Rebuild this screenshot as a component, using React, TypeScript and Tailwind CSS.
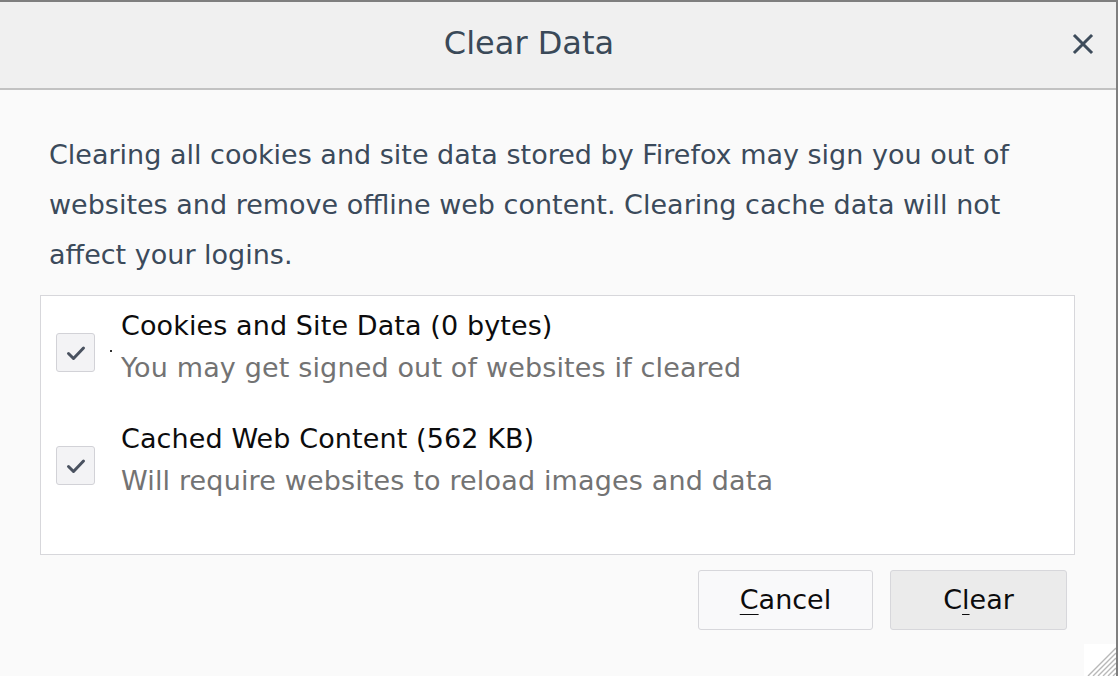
import React, { useState } from "react";

const font = { fontFamily: '"DejaVu Sans", Verdana, sans-serif' };

function CheckItem({
	label,
	hint,
	checked,
	onToggle,
	dot,
}: {
	label: string;
	hint: string;
	checked: boolean;
	onToggle: () => void;
	dot?: boolean;
}) {
	return (
		<label className="relative flex items-start cursor-default">
			<span
				onClick={onToggle}
				className="mt-[27px] w-[39px] h-[39px] shrink-0 flex items-center justify-center rounded-[3px] border border-[#d2d2d7] bg-[#f3f3f5]"
			>
				{checked && (
					<svg width="22" height="18" viewBox="0 0 22 18">
						<path
							d="M3.5 9.5 L8.5 14.5 L18.5 4"
							fill="none"
							stroke="#4a5260"
							strokeWidth="3"
							strokeLinecap="round"
							strokeLinejoin="round"
						/>
					</svg>
				)}
			</span>
			{dot && <span className="absolute left-[54px] top-[44px] w-[2px] h-[2px] bg-[#333]" />}
			<span className="ml-[26px] flex flex-col">
				<span className="text-[27px] leading-[40px] text-[#0c0c0d] tracking-[0.1px]">{label}</span>
				<span className="mt-[2px] text-[27px] leading-[40px] text-[#737373] tracking-[0.15px]">{hint}</span>
			</span>
		</label>
	);
}

export default function App() {
	const [cookies, setCookies] = useState(true);
	const [cache, setCache] = useState(true);

	return (
		<div
			style={font}
			className="relative w-[1118px] h-[676px] overflow-hidden flex flex-col bg-[#fafafa] border-t-2 border-r-2 border-[#7f7f7f]"
		>
			{/* Header */}
			<div className="relative h-[88px] shrink-0 flex items-center justify-center bg-[#f0f0f0] border-b-2 border-[#c2c2c2]">
				<h1 className="text-[32px] leading-none text-[#3a4958] -mt-[4px] -ml-[58px]">Clear Data</h1>
				<button className="absolute right-[21px] top-[30px] w-[24px] h-[24px] flex items-center justify-center">
					<svg width="22" height="22" viewBox="0 0 22 22">
						<path
							d="M3 3 L19 19 M19 3 L3 19"
							stroke="#3e4c5b"
							strokeWidth="3"
							strokeLinecap="square"
						/>
					</svg>
				</button>
			</div>

			{/* Body */}
			<div className="flex flex-col pl-[40px] pr-[41px] pt-[40px]">
				<p className="pl-[9px] text-[27px] leading-[50px] text-[#3b4a5b]">
					Clearing all cookies and site data stored by Firefox may sign you out of websites
					and remove offline web content. Clearing cache data will not affect your logins.
				</p>

				<div className="mt-[15px] h-[260px] border border-[#d7d7db] bg-white pl-[15px] pt-[10px] flex flex-col gap-[31px]">
					<CheckItem
						label="Cookies and Site Data (0 bytes)"
						hint="You may get signed out of websites if cleared"
						checked={cookies}
						onToggle={() => setCookies(!cookies)}
						dot
					/>
					<CheckItem
						label="Cached Web Content (562 KB)"
						hint="Will require websites to reload images and data"
						checked={cache}
						onToggle={() => setCache(!cache)}
					/>
				</div>

				<div className="mt-[15px] mr-[8px] flex justify-end gap-[17px]">
					<button className="w-[175px] h-[60px] rounded-[3px] border border-[#d7d7db] bg-[#f9f9fa] text-[27px] text-[#0c0c0d]">
						<span className="underline underline-offset-[5px] decoration-1">C</span>ancel
					</button>
					<button className="w-[177px] h-[60px] rounded-[3px] border border-[#d7d7db] bg-[#ebebeb] text-[27px] text-[#0c0c0d]">
						C<span className="underline underline-offset-[5px] decoration-1">l</span>ear
					</button>
				</div>
			</div>

			{/* Resize grip */}
			<svg
				className="absolute right-0 bottom-0"
				width="32"
				height="32"
				viewBox="0 0 32 32"
			>
				<rect width="32" height="32" fill="#ffffff" />
				<path
					d="M32 4 L4 32 M32 9 L9 32 M32 14 L14 32 M32 19 L19 32 M32 24 L24 32 M32 29 L29 32"
					stroke="#b8b8b8"
					strokeWidth="1.4"
				/>
			</svg>
		</div>
	);
}
